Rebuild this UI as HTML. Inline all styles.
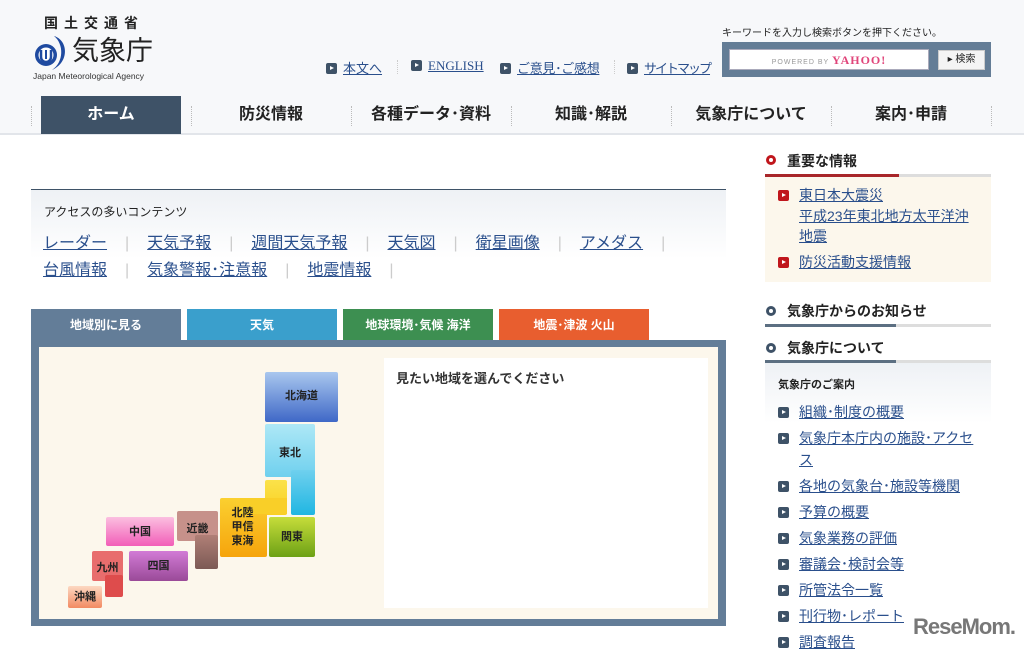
<!DOCTYPE html>
<html><head><meta charset="utf-8">
<style>
*{margin:0;padding:0;box-sizing:border-box}
body{width:1024px;height:651px;overflow:hidden;background:#fff;font-family:"Liberation Sans","Noto Sans CJK JP",sans-serif;color:#222;position:relative}
.a{position:absolute}
a,.lk{color:#2a4f8c;text-decoration:underline}
.hdr{left:0;top:0;width:1024px;height:135px;background:#f7f8fa;border-bottom:2px solid #e2e5ea}
.nav{top:96px;height:38px;font-size:16px;font-weight:bold;color:#222;text-align:center;line-height:38px}
.sep{top:106px;width:0;height:20px;border-left:1px dotted #bbb}
.tl{top:58px;font-size:13px}
.ic{display:inline-block;width:11px;height:11px;background:#3e5267;border-radius:2px;vertical-align:-1px;margin-right:6px;position:relative}
.ic:after{content:"";position:absolute;left:4px;top:3px;border-left:4px solid #fff;border-top:2.5px solid transparent;border-bottom:2.5px solid transparent}
.ic.r{background:#c0161c}
.rl .ic{margin-right:10px}
.tab{top:309px;width:150px;height:31px;color:#fff;font-size:12px;font-weight:bold;text-align:center;line-height:32px}
.blk{color:#222;font-size:11px;font-weight:bold;text-align:center;border-radius:2px}
.acc{font-size:16px;line-height:27px}
.acc span.s{color:#ccc;margin:0 18px}
.rl{font-size:14px;line-height:26px}
</style></head><body>
<div class="a hdr"></div>
<div class="a" style="left:44px;top:13px;font-size:14px;font-weight:bold;letter-spacing:6px;color:#222">国土交通省</div>
<svg class="a" style="left:32px;top:34px" width="40" height="38" viewBox="0 0 40 38"><path d="M22 2 C36 6 38 28 20 36 C32 28 32 10 22 2Z" fill="#1f4aa0"/><circle cx="14" cy="21" r="11" fill="#1f4aa0"/><circle cx="14" cy="21" r="7.5" fill="#fff"/><path d="M9 16 v7 a5 5 0 0 0 10 0 v-7" stroke="#1f4aa0" stroke-width="2.5" fill="none"/><path d="M14 16 v9" stroke="#1f4aa0" stroke-width="2"/></svg>
<div class="a" style="left:72px;top:34px;font-size:27px;color:#222;line-height:34px">気象庁</div>
<div class="a" style="left:33px;top:71px;font-size:8.5px;color:#333">Japan Meteorological Agency</div>
<div class="a tl" style="left:326px"><span class="ic"></span><a>本文へ</a></div>
<div class="a" style="left:397px;top:60px;height:14px;border-left:1px dotted #ccc"></div>
<div class="a tl" style="left:411px;font-family:'Liberation Serif',serif"><span class="ic"></span><a>ENGLISH</a></div>
<div class="a tl" style="left:500px"><span class="ic"></span><a style="letter-spacing:-0.3px">ご意見･ご感想</a></div>
<div class="a" style="left:614px;top:60px;height:14px;border-left:1px dotted #ccc"></div>
<div class="a tl" style="left:627px"><span class="ic"></span><a style="letter-spacing:-2px">サイトマップ</a></div>
<div class="a" style="left:722px;top:24px;font-size:10px;color:#222">キーワードを入力し検索ボタンを押下ください。</div>
<div class="a" style="left:722px;top:42px;width:269px;height:35px;background:#647d96"></div>
<div class="a" style="left:729px;top:49px;width:200px;height:21px;background:#fff;border:1px solid #aab;font-size:7px;color:#999;text-align:center;line-height:20px;letter-spacing:1px">POWERED BY <b style="color:#e0457a;font-size:12px;font-family:'Liberation Serif',serif">YAHOO!</b></div>
<div class="a" style="left:938px;top:50px;width:47px;height:20px;background:#f4f4f4;border:1px solid #ccc;font-size:10px;text-align:center;line-height:18px">▸ 検索</div>
<div class="a" style="left:41px;top:96px;width:140px;height:38px;background:#3e5267"></div>
<div class="a nav" style="left:41px;width:140px;color:#fff">ホーム</div>
<div class="a sep" style="left:31px"></div>
<div class="a sep" style="left:191px"></div>
<div class="a nav" style="left:191px;width:160px">防災情報</div>
<div class="a sep" style="left:351px"></div>
<div class="a nav" style="left:351px;width:160px">各種データ･資料</div>
<div class="a sep" style="left:511px"></div>
<div class="a nav" style="left:511px;width:160px">知識･解説</div>
<div class="a sep" style="left:671px"></div>
<div class="a nav" style="left:671px;width:160px">気象庁について</div>
<div class="a sep" style="left:831px"></div>
<div class="a nav" style="left:831px;width:160px">案内･申請</div>
<div class="a sep" style="left:991px"></div>

<div class="a" style="left:31px;top:189px;width:695px;height:70px;border-top:1px solid #3e5267;background:linear-gradient(#eef1f5,#fff)"></div>
<div class="a" style="left:44px;top:203px;font-size:12px">アクセスの多いコンテンツ</div>
<div class="a acc" style="left:43px;top:230px"><a>レーダー</a><span class="s">|</span><a>天気予報</a><span class="s">|</span><a>週間天気予報</a><span class="s">|</span><a>天気図</a><span class="s">|</span><a>衛星画像</a><span class="s">|</span><a>アメダス</a><span class="s">|</span></div>
<div class="a acc" style="left:43px;top:257px"><a>台風情報</a><span class="s">|</span><a>気象警報･注意報</a><span class="s">|</span><a>地震情報</a><span class="s">|</span></div>

<div class="a tab" style="left:31px;background:#637d98">地域別に見る</div>
<div class="a tab" style="left:187px;background:#3a9fcc">天気</div>
<div class="a tab" style="left:343px;background:#3d8f51">地球環境･気候 海洋</div>
<div class="a tab" style="left:499px;background:#e85e2f">地震･津波 火山</div>
<div class="a" style="left:31px;top:340px;width:695px;height:286px;background:#637d98"></div>
<div class="a" style="left:39px;top:347px;width:679px;height:272px;background:#fcf7ec"></div>
<div class="a" style="left:384px;top:358px;width:324px;height:250px;background:#fff"></div>
<div class="a" style="left:396px;top:368px;font-size:13px;font-weight:bold;color:#333">見たい地域を選んでください</div>

<div class="a blk" style="left:265px;top:372px;width:73px;height:50px;background:linear-gradient(#a9c7ee,#3f68c7);line-height:48px">北海道</div>
<div class="a" style="left:265px;top:424px;width:50px;height:53px;background:linear-gradient(#aee8f6,#6fd0ee);border-radius:2px"></div>
<div class="a" style="left:291px;top:470px;width:24px;height:45px;background:linear-gradient(#6fd0ee,#20b6e2);border-radius:2px"></div>
<div class="a blk" style="left:265px;top:444px;width:50px">東北</div>
<div class="a" style="left:265px;top:480px;width:22px;height:35px;background:linear-gradient(#fbe24a,#f9cf20);border-radius:2px"></div>
<div class="a" style="left:220px;top:498px;width:47px;height:59px;background:linear-gradient(#fbd030,#f6a40c);border-radius:2px"></div>
<div class="a" style="left:240px;top:498px;width:47px;height:16px;background:#f9cf28"></div>
<div class="a blk" style="left:220px;top:506px;width:45px;line-height:14px">北陸<br>甲信<br>東海</div>
<div class="a blk" style="left:269px;top:517px;width:46px;height:40px;background:linear-gradient(#c6dd3a,#6da116);line-height:40px">関東</div>
<div class="a" style="left:177px;top:511px;width:41px;height:30px;background:#c6918a;border-radius:2px"></div>
<div class="a" style="left:195px;top:535px;width:23px;height:34px;background:linear-gradient(#b07f77,#7c5a55);border-radius:2px"></div>
<div class="a blk" style="left:177px;top:520px;width:41px">近畿</div>
<div class="a blk" style="left:106px;top:517px;width:68px;height:29px;background:linear-gradient(#fbbfe0,#f25eb8);line-height:30px">中国</div>
<div class="a blk" style="left:129px;top:551px;width:59px;height:30px;background:linear-gradient(#d27bd6,#9a4a98);line-height:30px">四国</div>
<div class="a" style="left:92px;top:551px;width:31px;height:30px;background:#e86d6d;border-radius:2px"></div>
<div class="a" style="left:105px;top:575px;width:18px;height:22px;background:#de4c4c;border-radius:2px"></div>
<div class="a blk" style="left:92px;top:559px;width:31px">九州</div>
<div class="a blk" style="left:68px;top:586px;width:34px;height:22px;background:linear-gradient(#fcd8c2,#f28a62);line-height:22px">沖縄</div>

<!-- right -->
<div class="a" style="left:766px;top:155px;width:10px;height:10px;border-radius:50%;background:#c0161c"></div>
<div class="a" style="left:769px;top:158px;width:4px;height:4px;border-radius:50%;background:#fff"></div>
<div class="a" style="left:787px;top:151px;font-size:14px;font-weight:bold">重要な情報</div>
<div class="a" style="left:765px;top:174px;width:226px;height:3px;background:#ddd"></div>
<div class="a" style="left:765px;top:174px;width:134px;height:3px;background:#a8262a"></div>
<div class="a" style="left:765px;top:177px;width:226px;height:105px;background:#fcf7ec"></div>
<div class="a rl" style="left:778px;top:185px;line-height:20.5px;width:210px"><span class="ic r"></span><a>東日本大震災</a><br><span style="margin-left:21px"><a>平成23年東北地方太平洋沖</a></span><br><span style="margin-left:21px"><a>地震</a></span></div>
<div class="a rl" style="left:778px;top:249px"><span class="ic r"></span><a>防災活動支援情報</a></div>

<div class="a" style="left:766px;top:306px;width:10px;height:10px;border-radius:50%;background:#3e5267"></div>
<div class="a" style="left:769px;top:309px;width:4px;height:4px;border-radius:50%;background:#fff"></div>
<div class="a" style="left:787px;top:301px;font-size:14px;font-weight:bold">気象庁からのお知らせ</div>
<div class="a" style="left:765px;top:324px;width:226px;height:3px;background:#ddd"></div>
<div class="a" style="left:765px;top:324px;width:131px;height:3px;background:#5c6f82"></div>
<div class="a" style="left:766px;top:343px;width:10px;height:10px;border-radius:50%;background:#3e5267"></div>
<div class="a" style="left:769px;top:346px;width:4px;height:4px;border-radius:50%;background:#fff"></div>
<div class="a" style="left:787px;top:338px;font-size:14px;font-weight:bold">気象庁について</div>
<div class="a" style="left:765px;top:360px;width:226px;height:3px;background:#ddd"></div>
<div class="a" style="left:765px;top:360px;width:131px;height:3px;background:#5c6f82"></div>
<div class="a" style="left:765px;top:363px;width:226px;height:60px;background:linear-gradient(#eef1f5,#fff)"></div>
<div class="a" style="left:778px;top:376px;font-size:11px;font-weight:bold">気象庁のご案内</div>
<div class="a rl" style="left:778px;top:399px;width:210px">
<div><span class="ic"></span><a>組織･制度の概要</a></div>
<div style="line-height:22px;padding-top:2px"><span class="ic"></span><a>気象庁本庁内の施設･アクセ</a><br><span style="margin-left:21px"><a>ス</a></span></div>
<div style="margin-top:2px"><span class="ic"></span><a>各地の気象台･施設等機関</a></div>
<div><span class="ic"></span><a>予算の概要</a></div>
<div><span class="ic"></span><a>気象業務の評価</a></div>
<div><span class="ic"></span><a>審議会･検討会等</a></div>
<div><span class="ic"></span><a>所管法令一覧</a></div>
<div><span class="ic"></span><a>刊行物･レポート</a></div>
<div><span class="ic"></span><a>調査報告</a></div>
</div>
<div class="a" style="left:913px;top:614px;font-size:22px;font-weight:bold;color:#777;letter-spacing:-1px">ReseMom.</div>
</body></html>
